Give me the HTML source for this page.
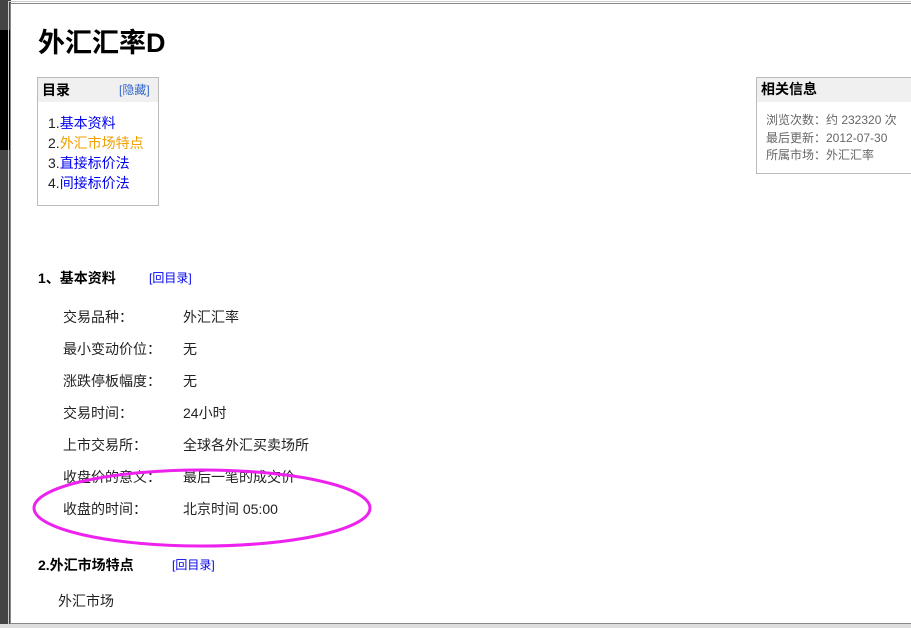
<!DOCTYPE html>
<html><head><meta charset="utf-8"><style>
body{margin:0;width:911px;height:628px;overflow:hidden;background:#fff;position:relative;font-family:"Liberation Sans","Noto Sans CJK SC",sans-serif;color:#222}
.a{position:absolute;white-space:nowrap;line-height:1}
.b{font-weight:bold}
.blue{color:#0000ee}
</style></head><body>
<div class="a" style="left:0;top:0;width:11px;height:628px;background:#444"></div>
<div class="a" style="left:0;top:30px;width:10px;height:120px;background:#000"></div>
<div class="a" style="left:10px;top:3px;width:900px;height:619px;border:1px solid #888;border-right:none;outline:1px solid #ccc;outline-offset:1px"></div>
<div class="a" style="left:0;top:624px;width:911px;height:4px;background:#ddd"></div>
<div class="a b" style="left:38px;top:30px;font-size:27px;color:#000">外汇汇率D</div>

<div class="a" style="left:37px;top:77px;width:120px;height:127px;border:1px solid #bbb"></div>
<div class="a" style="left:38px;top:78px;width:120px;height:24px;background:#f0f0f0"></div>
<div class="a b" style="left:42px;top:83px;font-size:14px;color:#000">目录</div>
<div class="a" style="left:119px;top:84px;font-size:12px;color:#3366cc">[隐藏]</div>
<div class="a" style="left:48px;top:113px;font-size:14px;line-height:20px"><span>1.</span><span class="blue">基本资料</span><br><span>2.</span><span style="color:#f0a000">外汇市场特点</span><br><span>3.</span><span class="blue">直接标价法</span><br><span>4.</span><span class="blue">间接标价法</span></div>

<div class="a" style="left:756px;top:77px;width:160px;height:95px;border:1px solid #bbb"></div>
<div class="a" style="left:757px;top:78px;width:160px;height:24px;background:#f0f0f0"></div>
<div class="a b" style="left:761px;top:82px;font-size:14px;color:#000">相关信息</div>
<div class="a" style="left:766px;top:112px;font-size:12px;line-height:17.5px;color:#666">浏览次数：约 232320 次<br>最后更新：2012-07-30<br>所属市场：外汇汇率</div>

<div class="a b" style="left:38px;top:271px;font-size:14px;color:#000">1、基本资料</div>
<div class="a" style="left:149px;top:272px;font-size:12px" ><span class="blue">[回目录]</span></div>

<div class="a" style="left:63px;top:301px;font-size:14px;line-height:32px">交易品种：<br>最小变动价位：<br>涨跌停板幅度：<br>交易时间：<br>上市交易所：<br>收盘价的意义：<br>收盘的时间：</div>
<div class="a" style="left:183px;top:301px;font-size:14px;line-height:32px">外汇汇率<br>无<br>无<br>24小时<br>全球各外汇买卖场所<br>最后一笔的成交价<br>北京时间 05:00</div>

<svg class="a" style="left:0;top:0" width="911" height="628"><ellipse cx="202" cy="508" rx="168" ry="38" fill="none" stroke="#ee22ee" stroke-width="3"/></svg>

<div class="a b" style="left:38px;top:558px;font-size:14px;color:#000">2.外汇市场特点</div>
<div class="a" style="left:172px;top:559px;font-size:12px"><span class="blue">[回目录]</span></div>
<div class="a" style="left:58px;top:594px;font-size:14px">外汇市场</div>
</body></html>
